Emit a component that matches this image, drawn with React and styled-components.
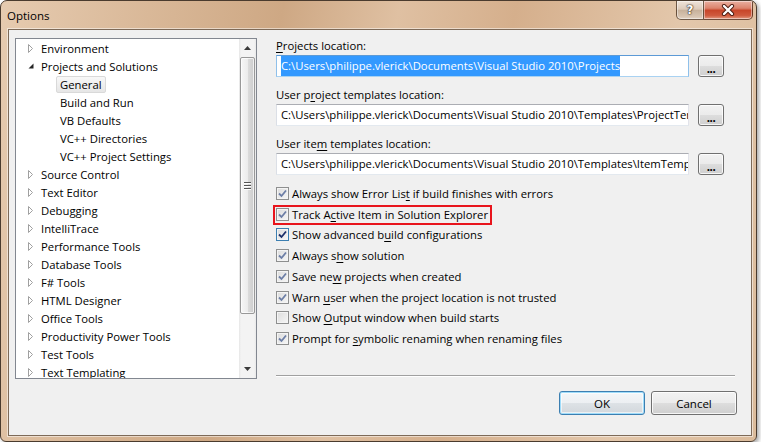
import React from 'react';
import styled, { createGlobalStyle, css } from 'styled-components';

const GlobalStyle = createGlobalStyle`
  body {
    margin: 0;
    background: #fff;
    font-family: "Open Sans", "Noto Sans", sans-serif;
    font-size: 11.3px;
    color: #000;
  }
`;

const Window = styled.div`
  box-sizing: border-box;
  width: 757px;
  height: 442px;
  display: flex;
  flex-direction: column;
  border: 1px solid #4a3b2e;
  border-radius: 7px 7px 6px 6px;
  background: linear-gradient(100deg, #e6cbb0 0%, #d9b898 18%, #cea884 34%, #dfc0a2 48%, #d5af8c 62%, #e3c7ab 82%, #dbbb9b 100%);
  box-shadow: 2px 2px 4px rgba(0, 0, 0, 0.35);
  overflow: hidden;
`;

const TitleBar = styled.div`
  height: 28px;
  display: flex;
  justify-content: space-between;
  align-items: flex-start;
  flex-shrink: 0;
`;

const Title = styled.div`
  padding: 7px 0 0 6px;
  line-height: 16px;
  font-size: 11.5px;
  color: #000;
`;

const CaptionButtons = styled.div`
  display: flex;
  margin-right: 3px;
`;

const CaptionButton = styled.div`
  box-sizing: border-box;
  height: 19px;
  display: flex;
  align-items: center;
  justify-content: center;
  border: 1px solid rgba(70, 45, 25, 0.75);
  border-top: none;
  box-shadow: inset 0 0 0 1px rgba(255, 255, 255, 0.45);
  ${p => p.$close ? css`
    width: 49px;
    border-left: none;
    border-radius: 0 0 5px 0;
    background: linear-gradient(#eab0a1 0%, #dc836c 40%, #c8462a 52%, #cf5a3e 80%, #e39a80 100%);
  ` : css`
    width: 28px;
    border-radius: 0 0 0 5px;
    background: linear-gradient(#efe4da 0%, #ddcbbb 45%, #c8b29c 52%, #d7c4b1 85%, #e2d3c4 100%);
  `}
`;

const HelpGlyph = styled.span`
  font-family: "DejaVu Sans", sans-serif;
  font-weight: bold;
  font-size: 12px;
  line-height: 12px;
  color: #fff;
  text-shadow: 0 0 1px #3b2c20, 0 0 1px #3b2c20, 0 0 2px #3b2c20;
`;

const Client = styled.div`
  flex: 1;
  display: flex;
  margin: 0 4px 5px 7px;
  padding: 8px 14px 0 6px;
  border: 1px solid #7d6a58;
  box-shadow: 0 0 0 1px rgba(255, 255, 255, 0.5);
  background: #f0f0f0;
`;

const Tree = styled.div`
  box-sizing: border-box;
  width: 242px;
  height: 341px;
  flex-shrink: 0;
  display: flex;
  border: 1px solid #828790;
  background: #fff;
`;

const TreeList = styled.div`
  flex: 1;
  overflow: hidden;
`;

const TreeRow = styled.div`
  height: 18px;
  display: flex;
  align-items: center;
  padding-left: ${p => p.$depth * 19}px;
  white-space: nowrap;
`;

const Expander = styled.div`
  box-sizing: border-box;
  width: 21px;
  height: 18px;
  padding-left: 12px;
  display: flex;
  align-items: center;
  flex-shrink: 0;
`;

const TreeLabel = styled.span`
  box-sizing: border-box;
  height: 17px;
  line-height: 15px;
  padding: 0 3px;
  border: 1px solid transparent;
  border-radius: 2px;
  ${p => p.$selected && css`
    border-color: #d9d9d9;
    background: linear-gradient(#f8f8f8, #e6e6e6);
  `}
`;

const ScrollBar = styled.div`
  width: 17px;
  display: flex;
  flex-direction: column;
  background: linear-gradient(to right, #e6e6e6 0px, #f3f3f3 2px, #f3f3f3 15px, #e9e9e9 17px);
`;

const ScrollArrow = styled.div`
  height: 18px;
  display: flex;
  align-items: center;
  justify-content: center;
  flex-shrink: 0;
`;

const Thumb = styled.div`
  box-sizing: border-box;
  height: 257px;
  margin: 0 1px;
  display: flex;
  flex-direction: column;
  align-items: center;
  justify-content: center;
  gap: 2px;
  border: 1px solid #989898;
  border-radius: 2px;
  background: linear-gradient(to right, #f6f6f6 0%, #ececec 50%, #dcdcdc 51%, #cdcdcd 100%);
  box-shadow: inset 0 0 0 1px rgba(255, 255, 255, 0.7);
`;

const Grip = styled.span`
  width: 7px;
  height: 1px;
  background: #555;
  box-shadow: 0 1px 0 #fff;
`;

const Track = styled.div`
  flex: 1;
`;

const Panel = styled.div`
  flex: 1;
  margin-left: 19px;
  display: flex;
  flex-direction: column;
`;

const FieldLabel = styled.div`
  height: 16px;
  line-height: 16px;
  margin: ${p => p.$first ? 0 : 10}px 0 1px;
`;

const FieldRow = styled.div`
  display: flex;
  gap: 9px;
  align-items: flex-start;
`;

const TextBox = styled.div`
  box-sizing: border-box;
  width: 413px;
  height: 22px;
  padding: 0 4px;
  line-height: 20px;
  white-space: nowrap;
  overflow: hidden;
  background: #fff;
  border: 1px solid;
  border-color: ${p => p.$focused ? '#5c9ad6 #8fc0ea #a9d2f2 #8fc0ea' : '#abadb3 #e2e3ea #e3e9ef #dbdfe6'};
`;

const Selected = styled.span`
  background: #3399ff;
  color: #fff;
  padding: 2px 0 3px;
`;

const PushButton = styled.button`
  box-sizing: border-box;
  width: ${p => p.$width}px;
  height: ${p => p.$height}px;
  padding: 0;
  flex-shrink: 0;
  font-family: inherit;
  font-size: 11.5px;
  color: #000;
  border: 1px solid ${p => p.$default ? '#3c7fb1' : '#707070'};
  border-radius: 3px;
  background: linear-gradient(#f2f2f2 0%, #ebebeb 50%, #dddddd 51%, #cfcfcf 100%);
  box-shadow: inset 0 0 0 1px rgba(255, 255, 255, 0.8);
  ${p => p.$default && css`
    background: linear-gradient(#f4f6f8 0%, #eceff2 50%, #dde2e6 51%, #d2d7dc 100%);
    box-shadow: inset 0 0 0 1px #9fdcfa, inset 0 0 0 2px rgba(255, 255, 255, 0.6);
  `}
`;

const Dots = styled.span`
  display: block;
  line-height: 10px;
  padding-top: 6px;
  letter-spacing: -0.5px;
  font-weight: bold;
`;

const CheckList = styled.div`
  margin-top: 8px;
  display: flex;
  flex-direction: column;
`;

const CheckRow = styled.div`
  position: relative;
  height: 20.75px;
  width: fit-content;
  display: flex;
  align-items: center;
  gap: 3px;
  white-space: nowrap;
  ${p => p.$marked && css`
    &::after {
      content: '';
      position: absolute;
      top: 1px;
      bottom: 0;
      left: -3px;
      right: -4px;
      border: 2px solid #e8141c;
    }
  `}
`;

const Box = styled.span`
  box-sizing: border-box;
  width: 13px;
  height: 13px;
  flex-shrink: 0;
  display: flex;
  align-items: center;
  justify-content: center;
  border: 1px solid ${p => p.$focused ? '#3c7fb1' : '#8e8f8f'};
  background: linear-gradient(135deg, #dcdcdc 0%, #f6f6f6 100%);
  box-shadow: inset 0 0 0 1px #f4f4f4;
`;

const Separator = styled.div`
  margin: 26px 2px 0 0;
  height: 1px;
  background: #a0a0a0;
  border-bottom: 1px solid #fff;
`;

const ButtonRow = styled.div`
  margin-top: 14px;
  display: flex;
  justify-content: flex-end;
  gap: 6px;
`;

const U = styled.span`
  text-decoration: underline;
  text-underline-offset: 2px;
`;

const treeItems = [
  { label: 'Environment', depth: 0, state: 'closed' },
  { label: 'Projects and Solutions', depth: 0, state: 'open' },
  { label: 'General', depth: 1, selected: true },
  { label: 'Build and Run', depth: 1 },
  { label: 'VB Defaults', depth: 1 },
  { label: 'VC++ Directories', depth: 1 },
  { label: 'VC++ Project Settings', depth: 1 },
  { label: 'Source Control', depth: 0, state: 'closed' },
  { label: 'Text Editor', depth: 0, state: 'closed' },
  { label: 'Debugging', depth: 0, state: 'closed' },
  { label: 'IntelliTrace', depth: 0, state: 'closed' },
  { label: 'Performance Tools', depth: 0, state: 'closed' },
  { label: 'Database Tools', depth: 0, state: 'closed' },
  { label: 'F# Tools', depth: 0, state: 'closed' },
  { label: 'HTML Designer', depth: 0, state: 'closed' },
  { label: 'Office Tools', depth: 0, state: 'closed' },
  { label: 'Productivity Power Tools', depth: 0, state: 'closed' },
  { label: 'Test Tools', depth: 0, state: 'closed' },
  { label: 'Text Templating', depth: 0, state: 'closed' },
];

const options = [
  { text: <>Always show Error Lis<U>t</U> if build finishes with errors</>, checked: true },
  { text: <>Track A<U>c</U>tive Item in Solution Explorer</>, checked: true, marked: true },
  { text: <>Show advanced b<U>u</U>ild configurations</>, checked: true, focused: true },
  { text: <>Always s<U>h</U>ow solution</>, checked: true },
  { text: <>Save ne<U>w</U> projects when created</>, checked: true },
  { text: <>Warn <U>u</U>ser when the project location is not trusted</>, checked: true },
  { text: <>Show <U>O</U>utput window when build starts</>, checked: false },
  { text: <>Prompt for <U>s</U>ymbolic renaming when renaming files</>, checked: true },
];

const ExpandIcon = ({ open }) => open ? (
  <svg width="6" height="6" viewBox="0 0 6 6">
    <path d="M5.5 0.5 L5.5 5.5 L0.5 5.5 Z" fill="#262626" />
  </svg>
) : (
  <svg width="6" height="9" viewBox="0 0 6 9">
    <path d="M0.5 0.5 L4.5 4.5 L0.5 8.5 Z" fill="#fff" stroke="#a0a0a0" />
  </svg>
);

const Arrow = ({ down }) => (
  <svg width="7" height="4" viewBox="0 0 7 4">
    <path d={down ? 'M0 0 H7 L3.5 4 Z' : 'M0 4 H7 L3.5 0 Z'} fill="#3a3a3a" />
  </svg>
);

const CheckMark = ({ dark }) => (
  <svg width="9" height="9" viewBox="0 0 9 9">
    <path d="M1 4.5 L3.5 7 L8 1.5" fill="none" stroke={dark ? '#1c2f6a' : '#6c7ea6'} strokeWidth="1.8" />
  </svg>
);

const CloseIcon = () => (
  <svg width="14" height="12" viewBox="0 0 14 12">
    <path d="M3 2 L11 10 M11 2 L3 10" stroke="#4a1a10" strokeWidth="4.2" strokeLinecap="round" />
    <path d="M3 2 L11 10 M11 2 L3 10" stroke="#fff" strokeWidth="2.4" strokeLinecap="round" />
  </svg>
);

const Field = ({ label, value, focused, first }) => (
  <>
    <FieldLabel $first={first}>{label}</FieldLabel>
    <FieldRow>
      <TextBox $focused={focused}>
        {focused ? <Selected>{value}</Selected> : value}
      </TextBox>
      <PushButton $width={26} $height={22}><Dots>...</Dots></PushButton>
    </FieldRow>
  </>
);

const App = () => (
  <>
    <GlobalStyle />
    <Window>
      <TitleBar>
        <Title>Options</Title>
        <CaptionButtons>
          <CaptionButton><HelpGlyph>?</HelpGlyph></CaptionButton>
          <CaptionButton $close><CloseIcon /></CaptionButton>
        </CaptionButtons>
      </TitleBar>
      <Client>
        <Tree>
          <TreeList>
            {treeItems.map(item => (
              <TreeRow key={item.label} $depth={item.depth}>
                <Expander>
                  {item.state && <ExpandIcon open={item.state === 'open'} />}
                </Expander>
                <TreeLabel $selected={item.selected}>{item.label}</TreeLabel>
              </TreeRow>
            ))}
          </TreeList>
          <ScrollBar>
            <ScrollArrow><Arrow /></ScrollArrow>
            <Thumb><Grip /><Grip /><Grip /></Thumb>
            <Track />
            <ScrollArrow><Arrow down /></ScrollArrow>
          </ScrollBar>
        </Tree>
        <Panel>
          <Field
            first
            focused
            label={<><U>P</U>rojects location:</>}
            value="C:\Users\philippe.vlerick\Documents\Visual Studio 2010\Projects"
          />
          <Field
            label={<>User p<U>r</U>oject templates location:</>}
            value="C:\Users\philippe.vlerick\Documents\Visual Studio 2010\Templates\ProjectTemplates"
          />
          <Field
            label={<>User ite<U>m</U> templates location:</>}
            value="C:\Users\philippe.vlerick\Documents\Visual Studio 2010\Templates\ItemTemplates"
          />
          <CheckList>
            {options.map((opt, i) => (
              <CheckRow key={i} $marked={opt.marked}>
                <Box $focused={opt.focused}>
                  {opt.checked && <CheckMark dark={opt.focused} />}
                </Box>
                <span>{opt.text}</span>
              </CheckRow>
            ))}
          </CheckList>
          <Separator />
          <ButtonRow>
            <PushButton $default $width={86} $height={24}>OK</PushButton>
            <PushButton $width={86} $height={24}>Cancel</PushButton>
          </ButtonRow>
        </Panel>
      </Client>
    </Window>
  </>
);

export default App;
